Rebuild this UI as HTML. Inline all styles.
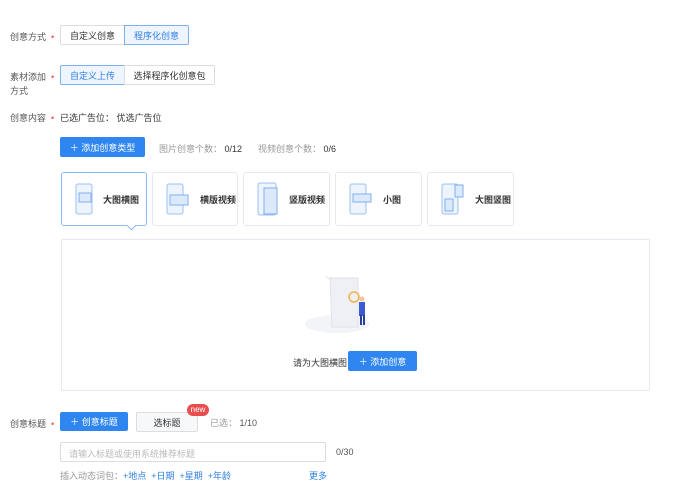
<!DOCTYPE html>
<html><head><meta charset="utf-8"><style>
*{box-sizing:border-box;margin:0;padding:0}
body{width:693px;height:500px;background:#fff;font-family:"Liberation Sans","Noto Sans CJK SC",sans-serif;font-size:9px;color:#333;position:relative;overflow:hidden}
.a{position:absolute;white-space:nowrap}
.lab{color:#555}
.star{color:#e55;}
.b{position:absolute;border:1px solid #ddd;display:flex;align-items:center;justify-content:center;background:#fff;color:#333}
.sel{background:#eef5ff;border-color:#7fb0ee;color:#2f7fe0}
.pb{position:absolute;background:#2f86f0;color:#fff;border-radius:2px;display:flex;align-items:center;justify-content:center}
.card{position:absolute;top:172px;height:54px;border:1px solid #e6e9ef;border-radius:3px;background:#fff;display:flex;align-items:center;font-weight:bold;font-size:9px;color:#333}
.card svg{margin-left:13px;margin-right:10px}
.g{color:#999}
.lk{color:#2f7fe0}
</style></head><body>
<div class="a lab" style="left:10px;top:30px">创意方式 <span class="star">&nbsp;•</span></div>
<div class="b" style="left:60px;top:25px;width:65px;height:20px;border-radius:2px 0 0 2px">自定义创意</div>
<div class="b sel" style="left:124px;top:25px;width:65px;height:20px;border-radius:0 2px 2px 0">程序化创意</div>

<div class="a lab" style="left:10px;top:70px">素材添加 <span class="star">&nbsp;•</span></div>
<div class="a lab" style="left:10px;top:84px">方式</div>
<div class="b sel" style="left:60px;top:65px;width:65px;height:20px;border-radius:2px 0 0 2px">自定义上传</div>
<div class="b" style="left:124px;top:65px;width:91px;height:20px;border-radius:0 2px 2px 0">选择程序化创意包</div>

<div class="a lab" style="left:10px;top:111px">创意内容 <span class="star">&nbsp;•</span></div>
<div class="a" style="left:60px;top:111px">已选广告位：&nbsp;优选广告位</div>

<div class="pb" style="left:60px;top:137px;width:85px;height:20px">＋ 添加创意类型</div>
<div class="a g" style="left:159px;top:142px">图片创意个数：&nbsp;<span style="color:#333">0/12</span></div>
<div class="a g" style="left:258px;top:142px">视频创意个数：&nbsp;<span style="color:#333">0/6</span></div>

<div class="card" style="left:61px;width:86px;border-color:#8fbbef"><svg width="18" height="32"><rect x="1" y="1" width="16" height="30" rx="2" fill="#eef4fd" stroke="#9cc1ee"/><rect x="4" y="10" width="12" height="9" fill="#dce9fb" stroke="#7fb0ee"/></svg>大图横图</div>
<div style="position:absolute;left:128px;top:222px;width:7px;height:7px;background:#fff;border-right:1px solid #8fbbef;border-bottom:1px solid #8fbbef;transform:rotate(45deg)"></div>
<div class="card" style="left:152px;width:86px"><svg width="24" height="32"><rect x="1" y="1" width="16" height="30" rx="2" fill="#eef4fd" stroke="#9cc1ee"/><rect x="4" y="12" width="18" height="10" fill="#dce9fb" stroke="#7fb0ee"/></svg>横版视频</div>
<div class="card" style="left:243px;width:87px"><svg width="22" height="34"><rect x="1" y="1" width="18" height="32" rx="2" fill="#eef4fd" stroke="#9cc1ee"/><rect x="7" y="6" width="13" height="26" fill="#dce9fb" stroke="#7fb0ee"/></svg>竖版视频</div>
<div class="card" style="left:335px;width:87px"><svg width="24" height="32"><rect x="1" y="1" width="16" height="30" rx="2" fill="#eef4fd" stroke="#9cc1ee"/><rect x="4" y="11" width="18" height="8" fill="#dce9fb" stroke="#7fb0ee"/></svg>小图</div>
<div class="card" style="left:427px;width:87px"><svg width="24" height="32"><rect x="1" y="1" width="16" height="30" rx="2" fill="#eef4fd" stroke="#9cc1ee"/><rect x="4" y="16" width="8" height="12" fill="#dce9fb" stroke="#7fb0ee"/><rect x="14" y="2" width="8" height="12" fill="#dce9fb" stroke="#7fb0ee"/></svg>大图竖图</div>

<div style="position:absolute;left:61px;top:239px;width:589px;height:152px;border:1px solid #e6e9ef;border-radius:2px"></div>
<svg class="a" style="left:300px;top:272px" width="75" height="65">
<ellipse cx="37" cy="52" rx="32" ry="9" fill="#f3f4f7"/>
<path d="M30 6 L58 6 L58 55 L32 55 Z" fill="#eef0f5" stroke="#dfe2ea"/>
<path d="M26 4 Q28 8 30 6" fill="none" stroke="#dfe2ea"/>
<circle cx="54" cy="25" r="5" fill="none" stroke="#f2b24c" stroke-width="1.5"/>
<rect x="59" y="30" width="6" height="14" fill="#3b5bd0"/>
<rect x="60" y="43" width="2" height="10" fill="#2a3f9a"/><rect x="63" y="43" width="2" height="10" fill="#2a3f9a"/>
<circle cx="62" cy="27" r="2.5" fill="#f0c2a0"/>
</svg>
<div class="a" style="left:293px;top:356px">请为大图横图</div>
<div class="pb" style="left:348px;top:351px;width:69px;height:20px">＋ 添加创意</div>

<div class="a lab" style="left:10px;top:417px">创意标题 <span class="star">&nbsp;•</span></div>
<div class="pb" style="left:60px;top:412px;width:68px;height:19px">＋ 创意标题</div>
<div class="b" style="left:136px;top:412px;width:62px;height:20px;background:#f7f8fa;border-radius:2px">选标题</div>
<div class="a" style="left:187px;top:404px;width:22px;height:12px;background:#e84e4e;color:#fff;border-radius:6px;font-size:8px;text-align:center;line-height:12px">new</div>
<div class="a g" style="left:210px;top:416px">已选：&nbsp;<span style="color:#555">1/10</span></div>
<div style="position:absolute;left:60px;top:442px;width:266px;height:20px;border:1px solid #ddd;border-radius:2px"></div>
<div class="a" style="left:69px;top:447px;color:#bbb">请输入标题或使用系统推荐标题</div>
<div class="a" style="left:336px;top:447px;color:#555">0/30</div>
<div class="a g" style="left:60px;top:469px">插入动态词包：<span class="lk">+地点 &nbsp;+日期 &nbsp;+星期 &nbsp;+年龄</span></div>
<div class="a lk" style="left:309px;top:469px">更多</div>
</body></html>
